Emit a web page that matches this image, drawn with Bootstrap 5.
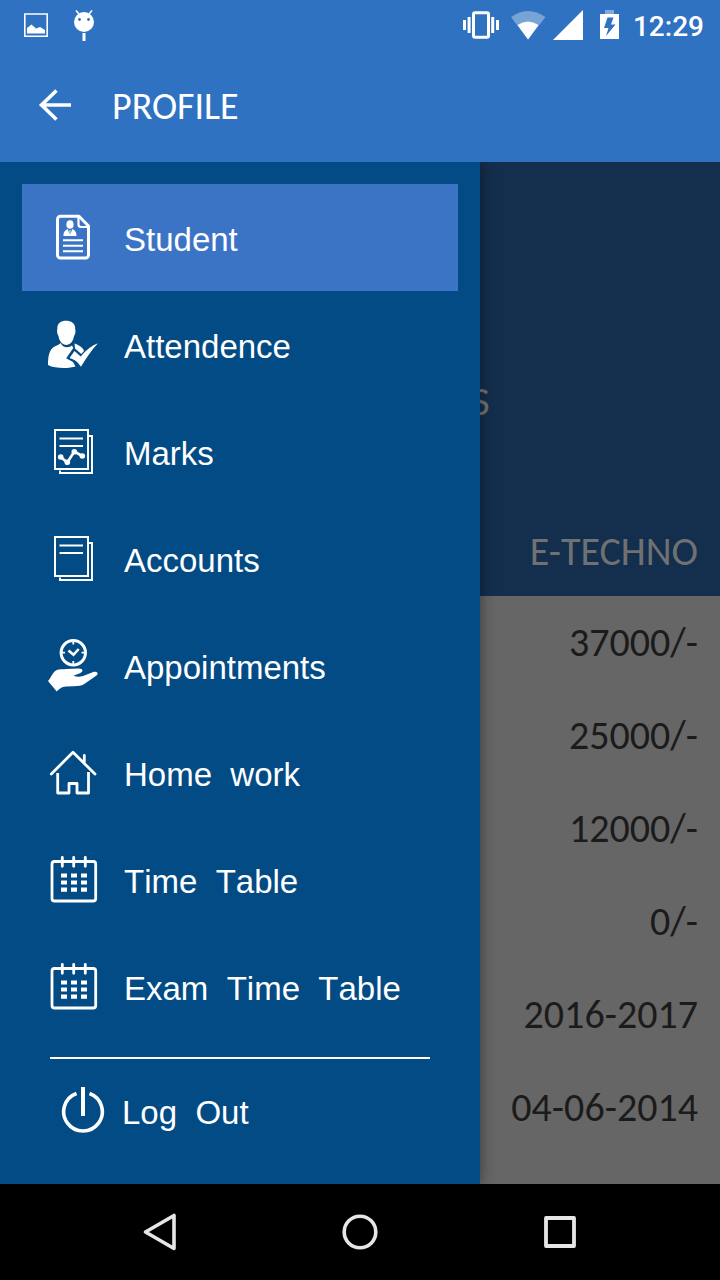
<!DOCTYPE html>
<html lang="en">
<head>
<meta charset="utf-8">
<meta name="viewport" content="width=device-width, initial-scale=1">
<title>Profile</title>
<link rel="stylesheet" href="https://cdn.jsdelivr.net/npm/bootstrap@5.3.0/dist/css/bootstrap.min.css">
<style>
body { font-family: Carlito, Lato, sans-serif; background: #000; }
svg { display: block; flex: none; }
.top-area { background: #2f72c2; color: #fff; }
.status-bar { height: 50px; padding: 0 16px 0 24px; }
.clock { font: 500 28px/32px Roboto, sans-serif; padding: 4px 0 0 12px; }
.app-bar { height: 112px; padding: 0 38px; gap: 40px; }
.app-title { font-size: 38px; line-height: 44px; }
.plain-btn { background: none; border: 0; padding: 0; color: inherit; }
.summary { background: #142e4d; color: #707173; height: 434px; font-size: 40px; line-height: 44px; padding-bottom: 22px; }
.student-name { width: 68%; margin-bottom: 106px; }
.edge { padding-right: 22px; }
.details { background: #666; color: #1b1b1b; font-size: 40px; line-height: 44px; }
.detail-row { height: 93px; }
.drawer { width: 66.6667%; background: #034b84; box-shadow: 0 0 14px rgba(0,0,0,.45); padding: 22px; font-family: "Liberation Sans", Arial, sans-serif; font-size: 33px; line-height: 40px; font-kerning: none; }
.drawer a { color: #fff; text-decoration: none; }
.menu-link { padding: 25px 26px; gap: 26px; }
.menu-link.active { background: #3c74c5; }
.menu-text { padding-top: 4px; white-space: nowrap; }
.divider { border-top: 2px solid #fff; margin: 17px 28px 28px; }
.logout { padding-left: 39px; gap: 17px; }
.soft-keys { height: 96px; background: #000; color: #e6e6e6; padding: 0 60px; }
</style>
</head>
<body class="d-flex flex-column min-vh-100">
<header class="top-area">
  <div class="status-bar d-flex align-items-center justify-content-between">
    <div class="d-flex align-items-center">
      <svg width="24" height="50" viewBox="24 0 24 50" fill="none" stroke="#fff"><path stroke-width="1.6" d="M24.8 14H47.2V36.2H24.8Z"/><path fill="#fff" stroke="none" d="M27 33.500V28L31.500 24.500L36 28.500L40 27L45 30V33.500Z"/></svg>
      <svg class="ms-4" width="24" height="50" viewBox="72 0 24 50"><circle cx="84" cy="22" r="10" fill="#fff"/><path stroke="#fff" stroke-width="1.600" d="M76 10.500L79 14M92 10.500L89 14"/><path stroke="#fff" stroke-width="3" d="M84 33V41"/><circle cx="79.500" cy="19.500" r="1.400" fill="#2f72c2"/><circle cx="88.500" cy="19.500" r="1.400" fill="#2f72c2"/></svg>
    </div>
    <div class="d-flex align-items-center">
      <svg width="158" height="50" viewBox="463 0 158 50" fill="#fff" aria-hidden="true">
        <path d="M463 20h3v10h-3zM467.600 17h3v16h-3zM491.200 17h3v16h-3zM496 20h3v10h-3z"/>
        <rect x="473.500" y="12.800" width="15" height="24.500" rx="1.500" fill="none" stroke="#fff" stroke-width="3"/>
        <path opacity=".35" d="M511 17Q528 5 545.500 17L528 39.500Z"/>
        <path d="M517.500 25Q528 18 538.500 25L528 39.500Z"/>
        <path d="M583 10V40H553Z"/>
        <path opacity=".4" d="M605 10h9v4h-9z"/>
        <path fill-rule="evenodd" d="M600 14h19v25h-19zM607.500 17.500L604 28H608.500L606 36L615.500 24.500H611L613.500 17.500Z"/>
      </svg>
      <span class="clock">12:29</span>
    </div>
  </div>
  <div class="app-bar d-flex align-items-center">
    <button type="button" class="plain-btn" aria-label="Back">
      <svg width="34" height="34" viewBox="38 89 34 34" fill="none" stroke="#fff" stroke-width="3.600"><path d="M71 105H41M56.500 90.500L41.500 105L56.500 119.500"/></svg>
    </button>
    <h1 class="app-title fw-normal mb-0">PROFILE</h1>
  </div>
</header>

<main class="position-relative flex-grow-1 d-flex flex-column">
  <section class="summary d-flex flex-column justify-content-end">
    <div class="student-name text-end">S</div>
    <div class="edge text-end">E-TECHNO</div>
  </section>
  <section class="details flex-grow-1 edge">
    <div class="detail-row d-flex align-items-center justify-content-end">37000/-</div>
    <div class="detail-row d-flex align-items-center justify-content-end">25000/-</div>
    <div class="detail-row d-flex align-items-center justify-content-end">12000/-</div>
    <div class="detail-row d-flex align-items-center justify-content-end">0/-</div>
    <div class="detail-row d-flex align-items-center justify-content-end">2016-2017</div>
    <div class="detail-row d-flex align-items-center justify-content-end">04-06-2014</div>
  </section>

  <div class="position-absolute top-0 bottom-0 start-0 end-0 overflow-hidden">
  <nav class="drawer h-100" aria-label="Main menu">
    <ul class="list-unstyled mb-0">
      <li><a href="#" class="menu-link active d-flex align-items-center" aria-current="page">
        <svg width="50" height="57" viewBox="0 0 50 57" fill="none" stroke="#fff"><path stroke-width="3" stroke-linejoin="round" d="M12.500 7.200H31L40.500 17V46a3 3 0 0 1-3 3H12.500a3 3 0 0 1-3-3V10.200a3 3 0 0 1 3-3Z"/><path stroke-width="2.200" d="M30.500 7V15.500a2.500 2.500 0 0 0 2.500 2.500H40"/><path stroke-width="2" d="M15 31.300H35M15 36.800H35M15 42.300H35"/><g fill="#fff" stroke="none"><ellipse cx="22" cy="15.500" rx="3.600" ry="4.300"/><path d="M15.500 27C15.500 22.500 17 21.500 19.800 20L21.500 25.500V21H22.500V25.500L24.200 20C27 21.500 28.500 22.500 28.500 27Z"/></g></svg>
        <span class="menu-text">Student</span></a></li>
      <li><a href="#" class="menu-link d-flex align-items-center">
        <svg width="50" height="57" viewBox="0 0 50 57" fill="#fff"><path d="M9.300 13C9 7 13 4.700 18 4.700S27.500 7 27.200 13C28 16 27 19 26 20C25.500 25 22 29 18.300 29S11 25 10.500 20C9 18 8.800 15 9.300 13Z"/><path d="M12.800 27C14 31.500 20.500 32.500 24 29.500L25.300 32L18.200 42.300L25 46L27.500 50.500C22 52.500 7 53 0 49C0 41 1 35 5 31.500C8 29.500 11 29 12.800 27Z"/><path d="M26.500 27.500C30.500 29 34.500 31 36 35L33.300 38L27 32.500Z"/><path d="M26.500 35L32.700 40.500C38 34 44 29.500 50 27.300C43.500 34 38 42.500 33 50.700C30 46.500 27 43.500 21.500 42Z"/></svg>
        <span class="menu-text">Attendence</span></a></li>
      <li><a href="#" class="menu-link d-flex align-items-center">
        <svg width="50" height="57" viewBox="0 0 50 57" fill="none" stroke="#fff" stroke-width="2"><path d="M7 7H40V46H7ZM41 13H44V50H11M12 51V47.500M11.500 15.500H35M11.500 23H35"/><path stroke-width="2.600" d="M12.700 34L19.300 39.500L26.300 28.500L34.300 33"/><g fill="#fff" stroke="none"><circle cx="12.700" cy="34" r="2.800"/><circle cx="19.300" cy="39.300" r="2.800"/><circle cx="26.300" cy="28.700" r="2.800"/><circle cx="34.300" cy="33" r="2.800"/></g></svg>
        <span class="menu-text">Marks</span></a></li>
      <li><a href="#" class="menu-link d-flex align-items-center">
        <svg width="50" height="57" viewBox="0 0 50 57" fill="none" stroke="#fff" stroke-width="2"><path d="M7 7H40V46H7ZM41 13H44V50H11M12 51V47.500M11.500 15.500H35M11.500 23H35"/></svg>
        <span class="menu-text">Accounts</span></a></li>
      <li><a href="#" class="menu-link d-flex align-items-center">
        <svg width="50" height="57" viewBox="0 0 50 57" fill="none" stroke="#fff"><circle cx="25.300" cy="15.700" r="12.200" stroke-width="3"/><path stroke-width="1.800" d="M25.300 4V7.500M25.300 24V27.500M13.500 15.700H17M33.500 15.700H37"/><path stroke-width="2.600" d="M20.500 13.500L25.500 17.800L30.700 12"/><path fill="#fff" stroke="none" d="M0 44C3 41 4 36 8 33.500C11 31.500 14 32.500 18 32L31 31.500C35 31.400 35.500 34.500 32.500 35.900L25.500 38.700C29 40.300 32 40 35 39L46 34.800C49 34 51 36.500 48.500 38.500L37 46.500C34 49 30 49 26 49.200L18 49.500C14 49.800 12.500 51 8.700 54.500Z"/></svg>
        <span class="menu-text">Appointments</span></a></li>
      <li><a href="#" class="menu-link d-flex align-items-center">
        <svg width="50" height="57" viewBox="0 0 50 57" fill="none" stroke="#fff" stroke-width="2.800"><path stroke-linecap="round" stroke-linejoin="round" d="M3.300 30L25 8.300L47 30M36.300 18V11.500"/><path stroke-linejoin="round" d="M9.700 29V49H21V39.500H29V49H40.500V28"/></svg>
        <span class="menu-text">Home&nbsp; work</span></a></li>
      <li><a href="#" class="menu-link d-flex align-items-center">
        <svg width="50" height="57" viewBox="0 0 50 57" fill="none" stroke="#fff" stroke-width="2.800"><rect x="4" y="10.500" width="43.700" height="39.500" rx="2.500"/><path stroke-linecap="round" d="M14.300 6.300V15.300M25.700 6.300V15.300M37.300 6.300V15.300"/><path stroke-width="4.200" stroke-dasharray="6 4" d="M13 24.500H39M13 31.500H39M13 38.700H39"/></svg>
        <span class="menu-text">Time&nbsp; Table</span></a></li>
      <li><a href="#" class="menu-link d-flex align-items-center">
        <svg width="50" height="57" viewBox="0 0 50 57" fill="none" stroke="#fff" stroke-width="2.800"><rect x="4" y="10.500" width="43.700" height="39.500" rx="2.500"/><path stroke-linecap="round" d="M14.300 6.300V15.300M25.700 6.300V15.300M37.300 6.300V15.300"/><path stroke-width="4.200" stroke-dasharray="6 4" d="M13 24.500H39M13 31.500H39M13 38.700H39"/></svg>
        <span class="menu-text">Exam&nbsp; Time&nbsp; Table</span></a></li>
    </ul>
    <div class="divider"></div>
    <a href="#" class="logout d-flex align-items-center">
      <svg width="44" height="48" viewBox="61 1087 44 48" fill="none" stroke="#fff" stroke-width="3.600"><path d="M76.500 1093.500A19.300 19.300 0 1 0 89.500 1093.500"/><path stroke-width="4" d="M83 1087V1116"/></svg>
      <span class="menu-text">Log&nbsp; Out</span>
    </a>
  </nav>
  </div>
</main>

<footer class="soft-keys d-flex align-items-center">
  <button type="button" class="plain-btn flex-fill d-flex justify-content-center" aria-label="Back"><svg width="40" height="40" viewBox="0 0 40 40" fill="none" stroke="currentColor" stroke-width="3.600" stroke-linejoin="round"><path d="M5.500 20L34 3.500V36.500Z"/></svg></button>
  <button type="button" class="plain-btn flex-fill d-flex justify-content-center" aria-label="Home"><svg width="40" height="40" viewBox="0 0 40 40" fill="none" stroke="currentColor" stroke-width="3.600"><circle cx="20" cy="20" r="15.800"/></svg></button>
  <button type="button" class="plain-btn flex-fill d-flex justify-content-center" aria-label="Recent apps"><svg width="40" height="40" viewBox="0 0 40 40" fill="none" stroke="currentColor" stroke-width="3.800" stroke-linejoin="round"><path d="M6 6H34V34H6Z"/></svg></button>
</footer>
<script src="https://cdn.jsdelivr.net/npm/bootstrap@5.3.0/dist/js/bootstrap.bundle.min.js"></script>
</body>
</html>
